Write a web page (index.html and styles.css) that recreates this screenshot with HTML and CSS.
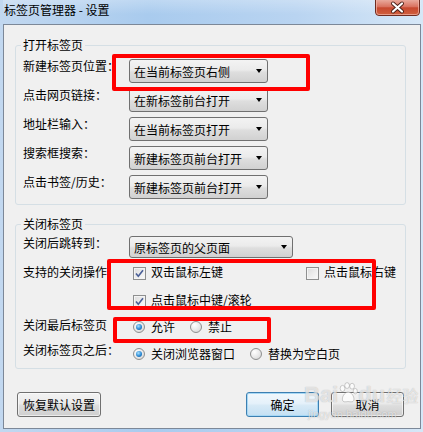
FILE: index.html
```html
<!DOCTYPE html>
<html lang="zh-CN">
<head>
  <meta charset="UTF-8" />
  <title>标签页管理器 - 设置</title>
  <link rel="stylesheet" href="styles.css">
</head>
<body>

  <div class="window">
    <div class="titlebar">
      <span class="title">标签页管理器 - 设置</span>
      <button class="close" aria-label="关闭">
        <svg viewBox="0 0 45 16" width="45" height="16" aria-hidden="true">
          <defs>
            <linearGradient id="closeBg" x1="0" y1="0" x2="0" y2="1">
              <stop offset="0" stop-color="#e9a99c"/>
              <stop offset="0.45" stop-color="#d8705d"/>
              <stop offset="0.5" stop-color="#c7482f"/>
              <stop offset="1" stop-color="#d0613f"/>
            </linearGradient>
          </defs>
          <path d="M0.5 0 V12 Q0.5 15.5 4 15.5 H41 Q44.5 15.5 44.5 12 V0" fill="url(#closeBg)" stroke="#6e2b20"/>
          <path d="M1.5 0 V12 Q1.5 14.5 4 14.5 H41 Q43.5 14.5 43.5 12 V0" fill="none" stroke="#f1b6aa" stroke-opacity="0.7"/>
          <path d="M18 3.5 L27 11.5 M27 3.5 L18 11.5" stroke="#4a2018" stroke-width="4" stroke-linecap="round"/>
          <path d="M18 3.5 L27 11.5 M27 3.5 L18 11.5" stroke="#fff" stroke-width="2.2" stroke-linecap="round"/>
        </svg>
      </button>
    </div>

    <div class="client">

      <fieldset class="group group-open">
        <legend>打开标签页</legend>
        <div class="row">
          <span class="label">新建标签页位置：</span>
          <div class="select"><span>在当前标签页右侧</span><i class="arrow"></i></div>
        </div>
        <div class="row">
          <span class="label">点击网页链接：</span>
          <div class="select"><span>在新标签前台打开</span><i class="arrow"></i></div>
        </div>
        <div class="row">
          <span class="label">地址栏输入：</span>
          <div class="select"><span>在当前标签页打开</span><i class="arrow"></i></div>
        </div>
        <div class="row">
          <span class="label">搜索框搜索：</span>
          <div class="select"><span>新建标签页前台打开</span><i class="arrow"></i></div>
        </div>
        <div class="row">
          <span class="label">点击书签/历史：</span>
          <div class="select"><span>新建标签页前台打开</span><i class="arrow"></i></div>
        </div>
      </fieldset>

      <fieldset class="group group-close">
        <legend>关闭标签页</legend>
        <div class="row">
          <span class="label">关闭后跳转到：</span>
          <div class="select wide"><span>原标签页的父页面</span><i class="arrow"></i></div>
        </div>
        <div class="row row-ops">
          <span class="label">支持的关闭操作:</span>
          <div class="checks">
            <label class="option"><span class="box checked"><svg viewBox="0 0 11 11" width="11" height="11"><path d="M2 5.5 L4.3 8.3 L9 2.2" fill="none" stroke="#4a5f97" stroke-width="1.6"/></svg></span>双击鼠标左键</label>
            <label class="option"><span class="box"></span>点击鼠标右键</label>
            <label class="option"><span class="box checked"><svg viewBox="0 0 11 11" width="11" height="11"><path d="M2 5.5 L4.3 8.3 L9 2.2" fill="none" stroke="#4a5f97" stroke-width="1.6"/></svg></span>点击鼠标中键/滚轮</label>
          </div>
        </div>
        <div class="row row-last">
          <span class="label">关闭最后标签页</span>
          <div class="radios">
            <label class="option"><span class="radio on"></span>允许</label>
            <label class="option"><span class="radio"></span>禁止</label>
          </div>
        </div>
        <div class="row row-after">
          <span class="label">关闭标签页之后：</span>
          <div class="radios">
            <label class="option"><span class="radio on"></span>关闭浏览器窗口</label>
            <label class="option"><span class="radio"></span>替换为空白页</label>
          </div>
        </div>
      </fieldset>

      <div class="buttons">
        <button class="btn reset">恢复默认设置</button>
        <button class="btn default">确定</button>
        <button class="btn">取消</button>
      </div>

      <!-- annotation boxes drawn over the dialog -->
      <div class="mark mark-1"></div>
      <div class="mark mark-2"></div>
      <div class="mark mark-3"></div>

      <div class="watermark" aria-hidden="true">
        <div class="wm-logo">
          <span>Bai</span>
          <svg viewBox="0 0 22 24" width="20" height="22">
            <g fill="rgba(255,255,255,0.75)" stroke="rgba(120,120,120,0.4)" stroke-width="1">
              <ellipse cx="5" cy="7" rx="2.6" ry="3.4"/>
              <ellipse cx="10" cy="3.8" rx="2.6" ry="3.2"/>
              <ellipse cx="15.5" cy="4.5" rx="2.6" ry="3.2"/>
              <ellipse cx="19" cy="10" rx="2.3" ry="3"/>
              <path d="M11 11 C7 11 4 17 5 20 C6 23 10 21 12 21.5 C15 22 18 22 17.5 18 C17 14 14 11 11 11 Z"/>
            </g>
          </svg>
          <span>du</span>
          <span class="wm-cn">经验</span>
        </div>
        <div class="wm-url">jingyan.baidu.com</div>
      </div>

    </div>
  </div>

</body>
</html>
```

FILE: styles.css
```css
* {
  box-sizing: border-box;
}

body {
  margin: 0;
  width: 423px;
  height: 432px;
  overflow: hidden;
  font-family: "Noto Sans CJK SC", "Microsoft YaHei", sans-serif;
  font-size: 12px;
  color: #000;
}

/* Window frame */
.window {
  height: 432px;
  display: flex;
  flex-direction: column;
  padding: 0 2px 3px 3px;
  background: linear-gradient(90deg, #c2d8f0 0%, #a9cbee 35%, #b9d4f1 70%, #d6e7f7 100%);
}

.titlebar {
  height: 24px;
  flex-shrink: 0;
  display: flex;
  align-items: flex-start;
  padding-left: 1px;
  background: linear-gradient(180deg, rgba(255,255,255,0.25), rgba(255,255,255,0) 60%);
}

.title {
  line-height: 20px;
  color: #000;
}

.close {
  margin-left: auto;
  margin-right: 1px;
  width: 45px;
  height: 16px;
  padding: 0;
  border: none;
  background: none;
  display: block;
}
.close svg {
  display: block;
}

.client {
  flex: 1;
  position: relative;
  background: #f0f0f0;
  border: 1px solid #7c8898;
  display: flex;
  flex-direction: column;
}

/* Group boxes */
.group {
  margin: 12px 14px 0 11px;
  padding: 6px 5px 5px;
  border: 1px solid #d5dfe5;
  border-radius: 3px;
  min-width: 0;
}
.group legend {
  padding: 0 2px;
  line-height: 16px;
}

.group-open {
  display: flex;
  flex-direction: column;
  gap: 5px;
}

.group-close {
  margin-top: 11px;
  padding: 4px 5px 7px;
}

.row {
  display: flex;
  align-items: flex-start;
}

.label {
  width: 108px;
  flex-shrink: 0;
  padding-left: 2px;
  line-height: 14px;
  white-space: nowrap;
}

/* Combo boxes */
.select {
  width: 139px;
  height: 24px;
  display: flex;
  align-items: center;
  padding: 0 5px 0 4px;
  border: 1px solid #707070;
  border-radius: 3px;
  background: linear-gradient(180deg, #f3f3f3 0%, #ebebeb 45%, #dedede 55%, #d1d1d1 100%);
  white-space: nowrap;
}
.select.wide {
  width: 164px;
  height: 22px;
}
.arrow {
  margin-left: auto;
  width: 0;
  height: 0;
  border-left: 3.5px solid transparent;
  border-right: 3.5px solid transparent;
  border-top: 4px solid #000;
}

/* Checkboxes and radios */
.row-ops {
  margin-top: 7px;
}
.checks {
  display: grid;
  grid-template-columns: 173px auto;
  row-gap: 13px;
  padding-left: 4px;
}

.row-last {
  margin-top: 10px;
}
.row-after {
  margin-top: 9px;
}
.radios {
  display: flex;
  gap: 15px;
  padding-left: 4px;
}
.row-last .radios {
  margin-top: 2px;
}
.row-after .radios {
  margin-top: 4px;
}

.option {
  display: flex;
  align-items: flex-start;
  gap: 5px;
  line-height: 14px;
  white-space: nowrap;
}

.box {
  width: 13px;
  height: 13px;
  margin-top: 2px;
  flex-shrink: 0;
  border: 1px solid #8e8f8f;
  background: linear-gradient(135deg, #dcdcdc, #fbfbfb);
  box-shadow: inset 0 0 0 1px #f4f4f4;
  display: flex;
  align-items: center;
  justify-content: center;
}
.box svg {
  display: block;
}

.radio {
  width: 12px;
  height: 12px;
  margin-top: 1px;
  margin-right: 1px;
  flex-shrink: 0;
  border: 1px solid #8e8f8f;
  border-radius: 50%;
  background: radial-gradient(circle at 35% 30%, #ffffff 0%, #e8e8e8 55%, #cfcfcf 100%);
  display: flex;
  align-items: center;
  justify-content: center;
}
.radio.on::after {
  content: "";
  width: 6px;
  height: 6px;
  border-radius: 50%;
  background: radial-gradient(circle at 40% 35%, #a8e1ff 0%, #2c8ad4 55%, #0f4f8e 100%);
}

/* Dialog buttons */
.buttons {
  display: flex;
  gap: 12px;
  margin-top: 23px;
  padding: 0 16px 0 13px;
}
.btn {
  width: 73px;
  height: 25px;
  padding: 0;
  font: inherit;
  color: #000;
  border: 1px solid #707070;
  border-radius: 3px;
  background: linear-gradient(180deg, #f3f3f3 0%, #ebebeb 45%, #dddddd 55%, #cfcfcf 100%);
  box-shadow: inset 0 0 0 1px rgba(255,255,255,0.6);
}
.btn.reset {
  width: 84px;
  margin-right: auto;
}
.btn.default {
  border-color: #3c7fb1;
  background: linear-gradient(180deg, #f1f8fc 0%, #e5f1fa 45%, #d6e9f6 55%, #c4e0f3 100%);
  box-shadow: inset 0 0 0 1px #a7d8f5;
}

/* Red annotation frames */
.mark {
  position: absolute;
  border: 4px solid #ff0000;
  border-radius: 2px;
  pointer-events: none;
}
.mark-1 {
  left: 108px;
  top: 29px;
  width: 198px;
  height: 37px;
}
.mark-2 {
  left: 103px;
  top: 234px;
  width: 269px;
  height: 51px;
}
.mark-3 {
  left: 109px;
  top: 292px;
  width: 158px;
  height: 26px;
}

/* Faint site watermark */
.watermark {
  position: absolute;
  left: 300px;
  top: 357px;
  pointer-events: none;
  color: rgba(255,255,255,0.65);
  text-shadow: 0 0 1px rgba(90,90,90,0.45);
  font-family: "Liberation Sans", Arial, sans-serif;
}
.wm-logo {
  display: flex;
  align-items: flex-end;
  font-size: 22px;
  font-weight: bold;
  line-height: 26px;
}
.wm-logo svg {
  margin: 0 0 4px 0;
}
.wm-cn {
  font-family: "Noto Sans CJK SC", sans-serif;
  font-size: 16px;
  font-weight: normal;
  margin-left: 1px;
}
.wm-url {
  font-size: 11px;
  line-height: 12px;
  padding-left: 4px;
}
```
